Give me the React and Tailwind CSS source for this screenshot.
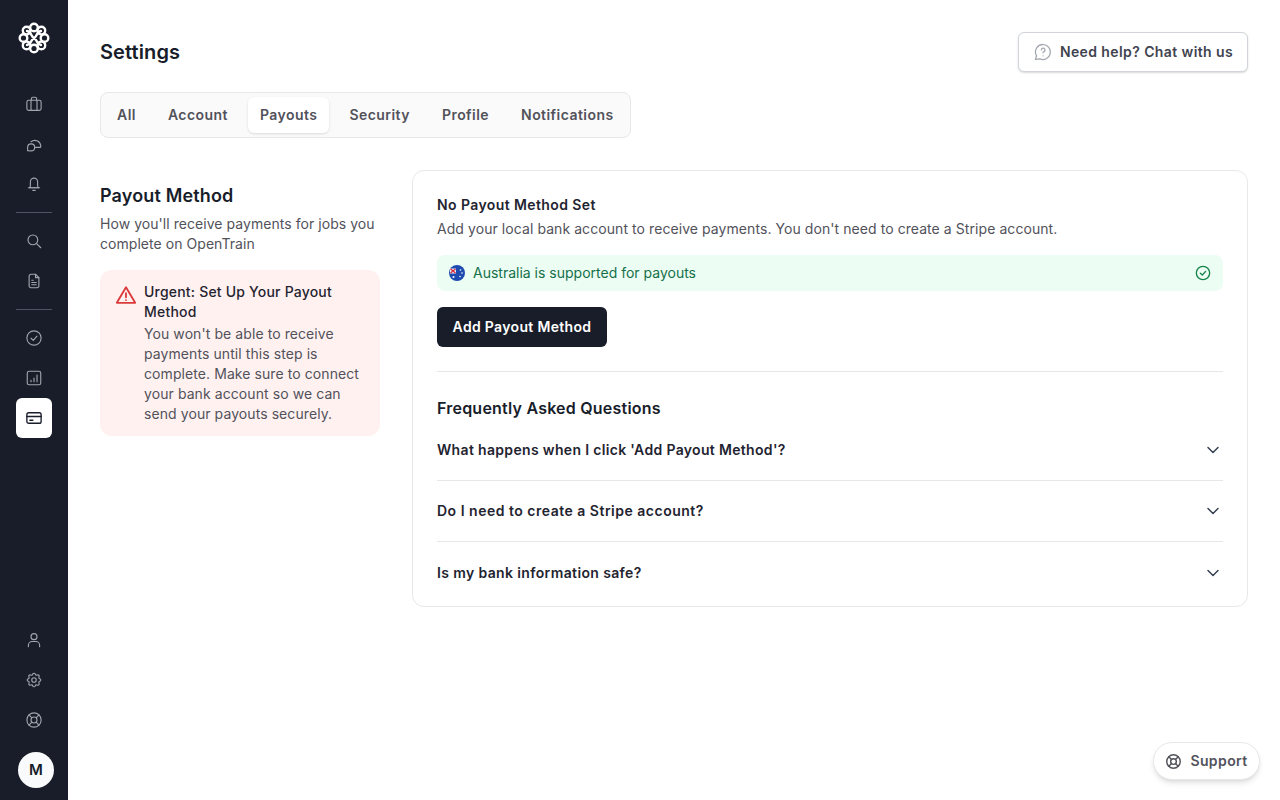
import React from "react";
import { ChevronDown } from "lucide-react";

const S = ({ children, size = 18, sw = 1.5, className = "" }) => (
  <svg width={size} height={size} viewBox="0 0 24 24" fill="none" stroke="currentColor" strokeWidth={sw} strokeLinecap="round" strokeLinejoin="round" className={className}>{children}</svg>
);

const Brief = () => <S><rect x="2.500" y="7" width="19" height="13.500" rx="2.500" /><path d="M8 20.500V7M16 20.500V7M8.500 7V5a2 2 0 0 1 2-2h3a2 2 0 0 1 2 2v2" /></S>;
const Shapes = () => <S><path d="M8 9A8 8 0 0 1 21 14v1.500a1 1 0 0 1-1 1h-7" /><path d="M3.500 21v-4.500a4.700 4.700 0 1 1 4.700 4.700z" /></S>;
const Bell = () => <S><path d="M6 17c.8-1 1.200-2 1.200-3.500V9a4.800 4.800 0 0 1 9.600 0v4.500c0 1.500.4 2.500 1.200 3.500z" /><path d="M4.500 17h15M10.500 20.500h3" /></S>;
const Search = () => <S><circle cx="10.500" cy="10.500" r="6.500" /><path d="M15.500 15.500L21 21" /></S>;
const Doc = () => <S><path d="M14 3H8a2.500 2.500 0 0 0-2.500 2.500v13A2.500 2.500 0 0 0 8 21h8a2.500 2.500 0 0 0 2.500-2.500V7.500z" /><path d="M14 3v4.500h4.500M9 11h2M9 14h6M9 17h6" /></S>;
const Check = () => <S><circle cx="12" cy="12" r="9.500" /><path d="M8 12.300l3 2.800 5-5.600" /></S>;
const Chart = () => <S><rect x="3" y="3" width="18" height="18" rx="2.500" /><path d="M8 17v-2M12 17v-5M16 17V8" sw="2" /></S>;
const Card = () => <S sw={1.800}><rect x="2.500" y="5" width="19" height="14" rx="2.500" /><path d="M2.500 10h19M6.500 15h4" /></S>;
const User = () => <S><circle cx="12" cy="7.500" r="4" /><path d="M4.500 21v-2a5 5 0 0 1 5-5h5a5 5 0 0 1 5 5v2" /></S>;
const Gear = () => <S><path d="M10.300 4.300c.4-1.800 3-1.800 3.400 0a1.700 1.700 0 0 0 2.600 1.100c1.500-.9 3.300.8 2.400 2.400a1.700 1.700 0 0 0 1 2.500c1.800.4 1.800 3 0 3.400a1.700 1.700 0 0 0-1 2.600c.9 1.500-.9 3.300-2.400 2.400a1.700 1.700 0 0 0-2.600 1c-.4 1.800-3 1.800-3.400 0a1.700 1.700 0 0 0-2.600-1c-1.500.9-3.300-.9-2.400-2.400a1.700 1.700 0 0 0-1-2.600c-1.800-.4-1.800-3 0-3.400a1.700 1.700 0 0 0 1-2.500c-.9-1.600.9-3.300 2.400-2.400a1.700 1.700 0 0 0 2.600-1.100z" /><circle cx="12" cy="12" r="3" /></S>;
const Ring = ({ size = 18, sw = 1.500 }) => <S size={size} sw={sw}><circle cx="12" cy="12" r="9.500" /><circle cx="12" cy="12" r="4" /><path d="M5.300 5.300l3.900 3.900M18.700 5.300l-3.900 3.900M5.300 18.700l3.900-3.900M18.700 18.700l-3.900-3.900" /></S>;

const Logo = () => (
  <svg width="32" height="32" viewBox="0 0 32 32" fill="none" stroke="white" strokeWidth="2.400" strokeLinecap="round">
    <circle cx="16" cy="5.500" r="3.800" />
    <circle cx="8.600" cy="8.600" r="3.800" />
    <circle cx="23.400" cy="8.600" r="3.800" />
    <circle cx="5.500" cy="16" r="3.800" />
    <circle cx="26.500" cy="16" r="3.800" />
    <circle cx="8.600" cy="23.400" r="3.800" />
    <circle cx="23.400" cy="23.400" r="3.800" />
    <circle cx="16" cy="26.500" r="3.800" />
    <path d="M9 9c5 1 4 6 7 7s2 6 7 7M23 9c-5 1-4 6-7 7s-2 6-7 7" />
  </svg>
);

const Rail = ({ children, active }) => (
  <div className={active ? "w-9 h-10 rounded-md bg-white text-[#181d2a] flex items-center justify-center" : "w-9 h-10 text-[#a1a5ad] flex items-center justify-center"}>{children}</div>
);

const Faq = ({ q, last, track }) => (
  <div className={last ? "h-[61px] flex items-center justify-between" : "h-[61px] flex items-center justify-between border-b border-[#e5e7eb]"}>
    <span className={track + " text-sm font-semibold text-[#1f2430]"}>{q}</span>
    <ChevronDown size={20} strokeWidth={1.800} className="text-[#374151]" />
  </div>
);

export default function App() {
  const tabs = ["All", "Account", "Payouts", "Security", "Profile", "Notifications"];
  return (
    <div className="h-[800px] w-[1280px] flex overflow-hidden bg-white text-[#181d2a] relative font-['Inter',sans-serif]">
      <aside className="w-[68px] shrink-0 bg-[#191d29] flex flex-col items-center pt-[22px] pb-3">
        <Logo />
        <div className="mt-[30px] flex flex-col items-center">
          <Rail><Brief /></Rail>
          <Rail><Shapes /></Rail>
          <Rail><Bell /></Rail>
        </div>
        <div className="w-9 h-px bg-[#4b5563] my-[8px]" />
        <div className="flex flex-col items-center">
          <Rail><Search /></Rail>
          <Rail><Doc /></Rail>
        </div>
        <div className="w-9 h-px bg-[#4b5563] my-[8px]" />
        <div className="flex flex-col items-center">
          <Rail><Check /></Rail>
          <Rail><Chart /></Rail>
          <Rail active><Card /></Rail>
        </div>
        <div className="mt-auto flex flex-col items-center">
          <Rail><User /></Rail>
          <Rail><Gear /></Rail>
          <Rail><Ring /></Rail>
          <div className="mt-[12px] ml-1 w-9 h-9 rounded-full bg-[#f9fafb] text-[#181d2a] flex items-center justify-center text-[15px] font-semibold">M</div>
        </div>
      </aside>
      <main className="flex-1 pt-8 px-8">
        <div className="flex items-start justify-between h-10">
          <h1 className="text-xl font-semibold leading-10 tracking-[0.1px] text-[#181d2a]">Settings</h1>
          <button className="h-10 w-[230px] rounded-md border border-[#d1d5db] bg-white shadow-[0_1px_2px_rgba(0,0,0,0.15)] flex items-center justify-center gap-[7px] text-sm font-semibold tracking-[0.4px] text-[#3f4450]">
            <svg width="20" height="20" viewBox="0 0 24 24" fill="none" stroke="#a1a5ad" strokeWidth="1.500" strokeLinecap="round" strokeLinejoin="round"><path d="M12 3a9 9 0 1 1-3.800 17.200L3 21l1.200-4.500A9 9 0 0 1 12 3z" /><path d="M10 9.500a2.200 2.200 0 1 1 3.200 2c-.8.400-1.200.9-1.200 1.500M12 16.500v.01" /></svg>
            Need help? Chat with us
          </button>
        </div>
        <div className="mt-[20px] inline-flex h-[46px] items-center rounded-lg border border-[#e8e8e8] bg-[#fafafa] px-[4px] text-sm font-semibold tracking-[0.45px] text-[#52525b] gap-[8px]">
          {tabs.map((t) => (
            <div key={t} className={t === "Payouts" ? "h-9 flex items-center px-3 rounded-md bg-white shadow-sm" : "h-9 flex items-center px-3"}>{t}</div>
          ))}
        </div>
        <div className="mt-8 flex gap-8 items-start">
          <div className="w-[280px] shrink-0">
            <h2 className="text-lg font-semibold leading-7 h-[40px] pt-[12px] mb-1 text-[#181d2a] tracking-[0.15px]">Payout Method</h2>
            <p className="text-sm leading-5 tracking-[0.05px] text-[#52525b]">How you'll receive payments for jobs you complete on OpenTrain</p>
            <div className="mt-4 rounded-xl bg-[#fff1f0] px-4 py-3 flex gap-2 h-[166px]">
              <svg width="22" height="22" viewBox="0 0 24 24" fill="none" stroke="#dc3a3a" strokeWidth="2" strokeLinecap="round" strokeLinejoin="round" className="shrink-0 mt-[2px] -ml-[1px] -mr-[1px]"><path d="M12 3.500L2 20.500h20z" /><path d="M12 10v4.500M12 17.500v.01" /></svg>
              <div>
                <div className="text-sm font-medium leading-5 tracking-[0.2px] text-[#1f2430]">Urgent: Set Up Your Payout Method</div>
                <div className="mt-[2px] text-sm leading-5 tracking-[0.08px] text-[#52525b]">You won't be able to receive payments until this step is complete. Make sure to connect your bank account so we can send your payouts securely.</div>
              </div>
            </div>
          </div>
          <div className="w-[836px] h-[437px] rounded-xl border border-[#e8e8ec] bg-white px-6 pt-6">
            <div className="text-sm font-semibold leading-5 tracking-[0.4px] text-[#1f2430]">No Payout Method Set</div>
            <div className="mt-1 text-sm leading-5 tracking-[0.07px] text-[#52525b]">Add your local bank account to receive payments. You don't need to create a Stripe account.</div>
            <div className="mt-4 h-9 rounded-lg bg-[#ecfdf3] px-3 flex items-center gap-2 text-sm text-[#15704a]">
              <svg width="16" height="16" viewBox="0 0 16 16"><circle cx="8" cy="8" r="8" fill="#1e4bb0" /><path d="M1 3.500h6v5H1z" fill="#e8e8f0" /><path d="M1.500 4l5 4M6.500 4l-5 4" stroke="#d9283a" strokeWidth="1.200" /><circle cx="4.500" cy="12" r="1" fill="#fff" /><circle cx="11.500" cy="5" r=".8" fill="#fff" /><circle cx="13" cy="8" r=".8" fill="#fff" /><circle cx="11" cy="11.500" r=".8" fill="#fff" /></svg>
              <span className="flex-1">Australia is supported for payouts</span>
              <svg width="16" height="16" viewBox="0 0 24 24" fill="none" stroke="#16834a" strokeWidth="2" strokeLinecap="round" strokeLinejoin="round"><circle cx="12" cy="12" r="10" /><path d="M8 12.300l3 2.700 5-5.500" /></svg>
            </div>
            <button className="mt-4 h-10 w-[170px] rounded-md bg-[#191d29] text-white text-sm font-semibold tracking-[0.33px] flex items-center justify-center">Add Payout Method</button>
            <div className="mt-6 border-t border-[#e5e7eb]" />
            <div className="mt-6 text-base font-semibold leading-6 tracking-[0.22px] text-[#181d2a]">Frequently Asked Questions</div>
            <div>
              <Faq track="tracking-[0.33px]" q="What happens when I click 'Add Payout Method'?" />
              <Faq track="tracking-[0.5px]" q="Do I need to create a Stripe account?" />
              <Faq track="tracking-[0.37px]" q="Is my bank information safe?" last />
            </div>
          </div>
        </div>
      </main>
      <div className="absolute left-[1153px] top-[742px] w-[107px] h-[38px] rounded-full border border-[#e8e8ec] bg-white shadow-md flex items-center justify-center gap-2 text-sm font-semibold tracking-[0.4px] text-[#52525b]">
        <Ring size={17} sw={2} />
        Support
      </div>
    </div>
  );
}
